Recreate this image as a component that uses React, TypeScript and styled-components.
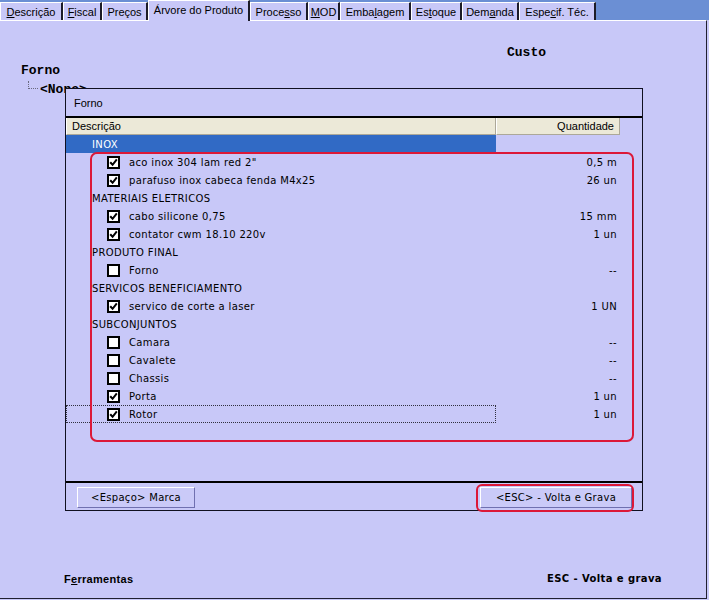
import React from "react";
import styled, { createGlobalStyle } from "styled-components";

const GlobalStyle = createGlobalStyle`
  * { box-sizing: border-box; }
  body {
    margin: 0;
    background: #c8c8f8;
    font-family: "Liberation Sans", Arial, sans-serif;
  }
`;

const Screen = styled.div`
  width: 709px;
  height: 600px;
  display: flex;
  flex-direction: column;
  background: #c8c8f8;
  overflow: hidden;
`;

// Barra das abas
const TabBar = styled.div`
  height: 20px;
  display: flex;
  align-items: flex-end;
  background: #6b8fd4;
`;

const Tab = styled.div<{ $w: number; $active?: boolean }>`
  width: ${(p) => p.$w}px;
  height: ${(p) => (p.$active ? 21 : 18)}px;
  margin-bottom: ${(p) => (p.$active ? -1 : 0)}px;
  position: relative;
  z-index: ${(p) => (p.$active ? 2 : 0)};
  display: flex;
  align-items: center;
  justify-content: center;
  padding-bottom: ${(p) => (p.$active ? 3 : 0)}px;
  background: #c8c8f8;
  border-top: 1px solid #ffffff;
  border-left: 1px solid #ffffff;
  border-right: 2px solid #1c1c28;
  font-size: 11px;
  color: #000;
  white-space: nowrap;
`;

// Painel principal
const Panel = styled.div`
  flex: 1;
  position: relative;
  display: flex;
  flex-direction: column;
  margin-right: 2px;
  margin-bottom: 1px;
  border-top: 1px solid #ffffff;
  border-right: 1px solid #202030;
  border-bottom: 1px solid #202030;
`;

const MonoLabel = styled.div<{ $left: number; $top: number }>`
  margin-top: ${(p) => p.$top}px;
  padding-left: ${(p) => p.$left}px;
  font-family: "Liberation Mono", "Courier New", monospace;
  font-weight: bold;
  font-size: 13px;
  line-height: 15px;
  color: #000;
`;

const TreeRow = styled.div`
  margin-top: 4px;
  padding-left: 28px;
  display: flex;
  align-items: flex-start;
  height: 15px;
  font-family: "Liberation Mono", "Courier New", monospace;
  font-weight: bold;
  font-size: 13px;
  line-height: 15px;
`;

const Branch = styled.div`
  width: 10px;
  height: 8px;
  margin-top: -1px;
  border-left: 1px dotted #6a6a80;
  border-bottom: 1px dotted #6a6a80;
`;

const TreeText = styled.span`
  margin-left: 2px;
`;

// Janela de seleção
const Dialog = styled.div`
  position: absolute;
  left: 65px;
  top: 67px;
  width: 578px;
  height: 423px;
  z-index: 3;
  display: flex;
  flex-direction: column;
  background: #c8c8f8;
  border: 1px solid #101020;
`;

const DialogTitle = styled.div`
  height: 29px;
  padding-left: 8px;
  display: flex;
  align-items: center;
  font-size: 11px;
  border-bottom: 2px solid #000;
`;

const HeaderRow = styled.div`
  display: flex;
  height: 17px;
`;

const HeaderCell = styled.div<{ $w: number; $right?: boolean }>`
  width: ${(p) => p.$w}px;
  height: 17px;
  display: flex;
  align-items: center;
  justify-content: ${(p) => (p.$right ? "flex-end" : "flex-start")};
  padding: ${(p) => (p.$right ? "0 5px 0 0" : "0 0 0 5px")};
  background: #ece9d8;
  border-left: 1px solid #ffffff;
  border-right: 1px solid #aca899;
  border-bottom: 1px solid #aca899;
  font-size: 11px;
  color: #000;
`;

const List = styled.div`
  flex: 1;
  border-bottom: 2px solid #000;
`;

const Row = styled.div`
  display: flex;
  height: 18px;
  font-family: "DejaVu Sans", sans-serif;
  font-size: 10px;
  letter-spacing: 0.35px;
  color: #000;
`;

const DescCell = styled.div<{ $selected?: boolean; $focused?: boolean; $child?: boolean }>`
  width: 430px;
  display: flex;
  align-items: center;
  gap: 9px;
  padding-left: ${(p) => (p.$child ? 41 : 26)}px;
  background: ${(p) => (p.$selected ? "#316ac5" : "transparent")};
  color: ${(p) => (p.$selected ? "#ffffff" : "#000")};
  outline: ${(p) => (p.$focused ? "1px dotted #303040" : "none")};
  outline-offset: -1px;
`;

const QtyCell = styled.div`
  width: 124px;
  display: flex;
  align-items: center;
  justify-content: flex-end;
  padding-right: 3px;
`;

const ButtonBar = styled.div`
  height: 27px;
  display: flex;
  justify-content: space-between;
  align-items: flex-start;
  padding: 4px 10px 0 11px;
`;

const Button = styled.div<{ $w: number }>`
  width: ${(p) => p.$w}px;
  height: 21px;
  display: flex;
  align-items: center;
  justify-content: center;
  background: #cacaf8;
  border: 1px solid;
  border-color: #ffffff #7070b0 #7070b0 #ffffff;
  font-family: "DejaVu Sans", sans-serif;
  font-size: 10px;
  letter-spacing: 0.3px;
  color: #000;
`;

// Marcações vermelhas por cima da janela
const ListHighlight = styled.div`
  position: absolute;
  left: 24px;
  top: 63px;
  width: 544px;
  height: 290px;
  border: 2px solid #dc1838;
  border-radius: 7px;
  pointer-events: none;
`;

const ButtonHighlight = styled.div`
  position: absolute;
  left: 410px;
  top: 395px;
  width: 158px;
  height: 28px;
  border: 2px solid #dc1838;
  border-radius: 6px;
  pointer-events: none;
`;

const Footer = styled.div`
  margin-top: auto;
  display: flex;
  justify-content: space-between;
  padding: 0 44px 12px 64px;
  line-height: 14px;
  color: #000;
`;

const FooterLeft = styled.span`
  font-weight: bold;
  font-size: 11px;
  letter-spacing: 0.3px;
`;

const FooterRight = styled.span`
  font-family: "DejaVu Sans", sans-serif;
  font-weight: bold;
  font-size: 10px;
  letter-spacing: 0.4px;
`;

function CheckBox({ checked }: { checked: boolean }) {
  return (
    <svg width="13" height="13" viewBox="0 0 13 13">
      <rect x="1" y="1" width="11" height="11" fill="#fff" stroke="#000" strokeWidth="2" />
      {checked && (
        <path d="M3.2 6.2 L5.6 8.8 L9.8 3.4" fill="none" stroke="#000" strokeWidth="2" />
      )}
    </svg>
  );
}

type Item =
  | { kind: "group"; label: string; selected?: boolean }
  | { kind: "item"; label: string; checked: boolean; qty: string; focused?: boolean };

const items: Item[] = [
  { kind: "group", label: "INOX", selected: true },
  { kind: "item", label: 'aco inox 304 lam red 2"', checked: true, qty: "0,5 m" },
  { kind: "item", label: "parafuso inox cabeca fenda M4x25", checked: true, qty: "26 un" },
  { kind: "group", label: "MATERIAIS ELETRICOS" },
  { kind: "item", label: "cabo silicone 0,75", checked: true, qty: "15 mm" },
  { kind: "item", label: "contator cwm 18.10 220v", checked: true, qty: "1 un" },
  { kind: "group", label: "PRODUTO FINAL" },
  { kind: "item", label: "Forno", checked: false, qty: "--" },
  { kind: "group", label: "SERVICOS BENEFICIAMENTO" },
  { kind: "item", label: "servico de corte a laser", checked: true, qty: "1 UN" },
  { kind: "group", label: "SUBCONJUNTOS" },
  { kind: "item", label: "Camara", checked: false, qty: "--" },
  { kind: "item", label: "Cavalete", checked: false, qty: "--" },
  { kind: "item", label: "Chassis", checked: false, qty: "--" },
  { kind: "item", label: "Porta", checked: true, qty: "1 un" },
  { kind: "item", label: "Rotor", checked: true, qty: "1 un", focused: true },
];

export default function App() {
  return (
    <Screen>
      <GlobalStyle />
      <TabBar>
        <Tab $w={63}><span><u>D</u>escrição</span></Tab>
        <Tab $w={39}><span><u>F</u>iscal</span></Tab>
        <Tab $w={46}><span>Preços</span></Tab>
        <Tab $w={102} $active><span>Árvore do Produto</span></Tab>
        <Tab $w={58}><span>Proce<u>s</u>so</span></Tab>
        <Tab $w={32}><span><u>M</u>OD</span></Tab>
        <Tab $w={71}><span>Emba<u>l</u>agem</span></Tab>
        <Tab $w={51}><span>Es<u>t</u>oque</span></Tab>
        <Tab $w={57}><span>Dem<u>a</u>nda</span></Tab>
        <Tab $w={77}><span>Espe<u>c</u>if. Téc.</span></Tab>
      </TabBar>
      <Panel>
        <MonoLabel $left={507} $top={24}>Custo</MonoLabel>
        <MonoLabel $left={21} $top={3}>Forno</MonoLabel>
        <TreeRow>
          <Branch />
          <TreeText>&lt;None&gt;</TreeText>
        </TreeRow>

        <Dialog>
          <DialogTitle>Forno</DialogTitle>
          <HeaderRow>
            <HeaderCell $w={430}>Descrição</HeaderCell>
            <HeaderCell $w={124} $right>Quantidade</HeaderCell>
          </HeaderRow>
          <List>
            {items.map((it, i) =>
              it.kind === "group" ? (
                <Row key={i}>
                  <DescCell $selected={it.selected}>{it.label}</DescCell>
                  <QtyCell />
                </Row>
              ) : (
                <Row key={i}>
                  <DescCell $child $focused={it.focused}>
                    <CheckBox checked={it.checked} />
                    <span>{it.label}</span>
                  </DescCell>
                  <QtyCell>{it.qty}</QtyCell>
                </Row>
              )
            )}
          </List>
          <ButtonBar>
            <Button $w={118}>&lt;Espaço&gt; Marca</Button>
            <Button $w={152}>&lt;ESC&gt; - Volta e Grava</Button>
          </ButtonBar>
          <ListHighlight />
          <ButtonHighlight />
        </Dialog>

        <Footer>
          <FooterLeft>F<u>e</u>rramentas</FooterLeft>
          <FooterRight>ESC - Volta e grava</FooterRight>
        </Footer>
      </Panel>
    </Screen>
  );
}
